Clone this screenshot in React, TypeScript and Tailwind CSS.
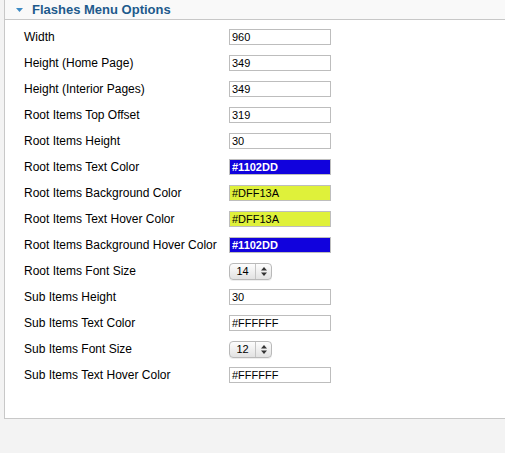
const fields: { label: string; kind: "text" | "color" | "select"; value: string; bg?: string; fg?: string }[] = [
  { label: "Width", kind: "text", value: "960" },
  { label: "Height (Home Page)", kind: "text", value: "349" },
  { label: "Height (Interior Pages)", kind: "text", value: "349" },
  { label: "Root Items Top Offset", kind: "text", value: "319" },
  { label: "Root Items Height", kind: "text", value: "30" },
  { label: "Root Items Text Color", kind: "color", value: "#1102DD", bg: "#1102DD", fg: "#ffffff" },
  { label: "Root Items Background Color", kind: "color", value: "#DFF13A", bg: "#DFF13A", fg: "#000000" },
  { label: "Root Items Text Hover Color", kind: "color", value: "#DFF13A", bg: "#DFF13A", fg: "#000000" },
  { label: "Root Items Background Hover Color", kind: "color", value: "#1102DD", bg: "#1102DD", fg: "#ffffff" },
  { label: "Root Items Font Size", kind: "select", value: "14" },
  { label: "Sub Items Height", kind: "text", value: "30" },
  { label: "Sub Items Text Color", kind: "text", value: "#FFFFFF" },
  { label: "Sub Items Font Size", kind: "select", value: "12" },
  { label: "Sub Items Text Hover Color", kind: "text", value: "#FFFFFF" },
];

const Stepper = ({ value }: { value: string }) => (
  <div className="flex h-[17px] w-[43px] items-stretch rounded-[4px] border border-[#b9b9b9] bg-gradient-to-b from-[#fdfdfd] to-[#e2e2e2] shadow-[0_1px_0_#eee]">
    <span className="flex flex-1 items-center justify-center text-[11px] leading-none text-black">{value}</span>
    <span className="flex w-[16px] items-center justify-center border-l border-[#c4c4c4]">
      <svg width="6" height="9" viewBox="0 0 6 9">
        <path d="M3 0 L6 3.5 L0 3.5 Z" fill="#333" />
        <path d="M3 9 L6 5.5 L0 5.5 Z" fill="#333" />
      </svg>
    </span>
  </div>
);

const Field = ({ f }: { f: (typeof fields)[number] }) => {
  if (f.kind === "select") return <Stepper value={f.value} />;
  const color = f.kind === "color";
  // white text on the dark swatch is drawn bold, dark text stays regular
  const bold = color && f.fg === "#ffffff";
  return (
    <div
      className={`flex h-[16px] w-[102px] items-center border border-[#bdbdbd] px-[2px] text-[11px] leading-none ${bold ? "font-bold" : ""} ${color ? "" : "bg-white text-black"}`}
      style={color ? { background: f.bg, color: f.fg } : undefined}
    >
      {f.value}
    </div>
  );
};

export default function App() {
  return (
    <div className="h-[453px] w-[505px] overflow-hidden bg-[#f3f3f3] pl-[4px] font-['Liberation_Sans',Arial,sans-serif]">
      <div className="h-[419px] w-[520px] border-b border-l border-[#c8c8c8] bg-white">
        <div className="flex h-[20px] items-center gap-[9px] border-b border-[#c8c8c8] bg-[#f9f9f9] pl-[11px]">
          <svg width="7" height="4" viewBox="0 0 7 4" className="mt-[1px]">
            <path d="M0 0 L7 0 L3.5 4 Z" fill="#3d8ac4" />
          </svg>
          <span className="text-[13px] font-bold leading-none text-[#1d5a8c]">Flashes Menu Options</span>
        </div>
        <div className="pt-[4px] pl-[19px]">
          {fields.map((f) => (
            <div key={f.label} className="grid h-[26px] grid-cols-[205px_auto] items-center">
              <span className="text-[12px] text-black">{f.label}</span>
              <Field f={f} />
            </div>
          ))}
        </div>
      </div>
    </div>
  );
}
